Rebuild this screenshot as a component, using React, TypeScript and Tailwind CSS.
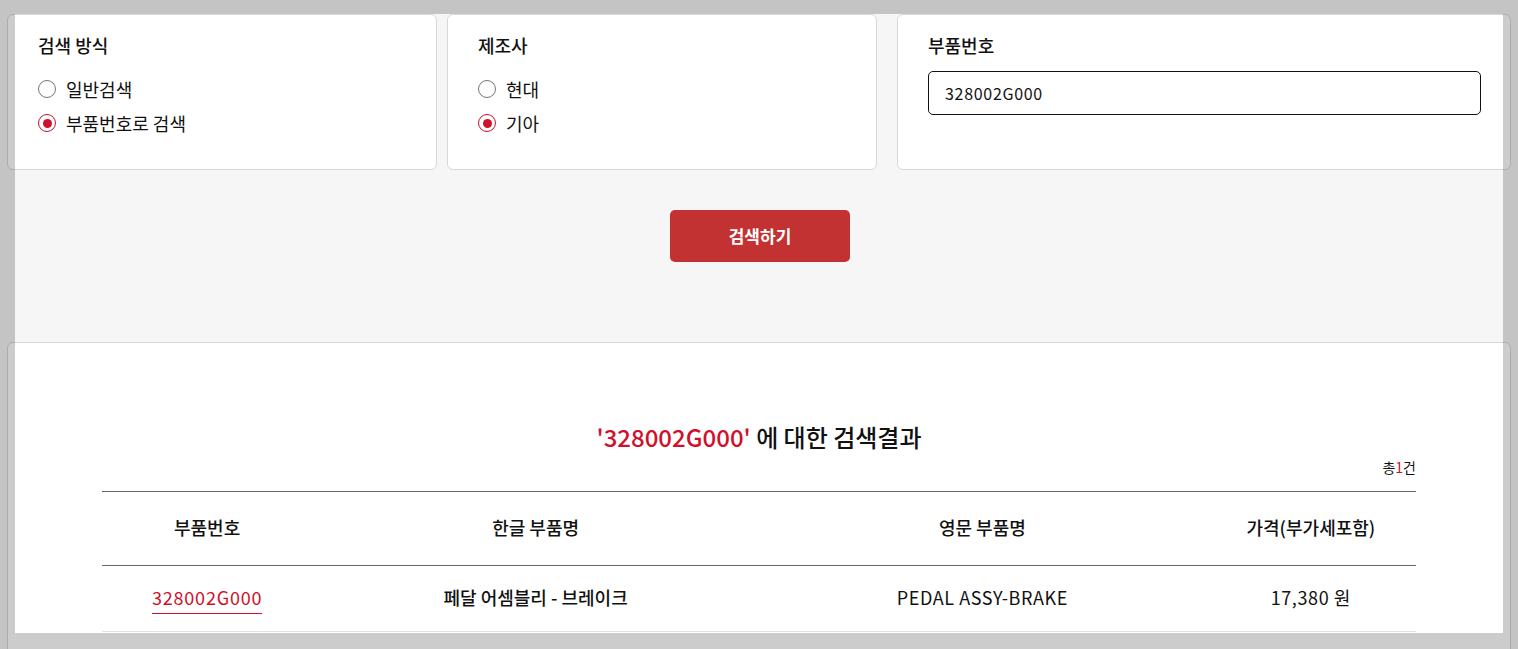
import React from 'react';

const font = { fontFamily: '"Noto Sans CJK KR", "Noto Sans", sans-serif' };

interface RadioProps {
  label: string;
  checked?: boolean;
}

const Radio: React.FC<RadioProps> = ({ label, checked }) => (
  <label className="flex items-center gap-[10px] h-6 text-[18px] text-[#111]">
    <span
      className={`flex items-center justify-center w-[18px] h-[18px] rounded-full border ${
        checked ? 'border-[#d0102c]' : 'border-[#767676]'
      }`}
    >
      {checked && <span className="w-[9px] h-[9px] rounded-full bg-[#d0102c]" />}
    </span>
    {label}
  </label>
);

const columns = [
  { label: '부품번호', w: 'w-[16%]' },
  { label: '한글 부품명', w: 'w-[34%]' },
  { label: '영문 부품명', w: 'w-[34%]' },
  { label: '가격(부가세포함)', w: 'w-[16%]' },
];

export default function App() {
  return (
    <div style={font} className="relative min-h-screen overflow-hidden bg-[#f6f6f6] px-[7px] pt-[14px]">
      <div className="flex">
        <div className="w-[430px] h-[156px] bg-white border border-[#d8d8d8] rounded-[6px] pl-[30px] pt-[18px]">
          <h3 className="text-[18px] font-medium leading-6 text-[#111]">검색 방식</h3>
          <div className="mt-[20px] flex flex-col gap-[10px]">
            <Radio label="일반검색" />
            <Radio label="부품번호로 검색" checked />
          </div>
        </div>
        <div className="ml-[10px] w-[430px] h-[156px] bg-white border border-[#d8d8d8] rounded-[6px] pl-[30px] pt-[18px]">
          <h3 className="text-[18px] font-medium leading-6 text-[#111]">제조사</h3>
          <div className="mt-[20px] flex flex-col gap-[10px]">
            <Radio label="현대" />
            <Radio label="기아" checked />
          </div>
        </div>
        <div className="ml-[20px] flex-1 h-[156px] bg-white border border-[#d8d8d8] rounded-[6px] pl-[30px] pr-[29px] pt-[18px]">
          <h3 className="text-[18px] font-medium leading-6 text-[#111]">부품번호</h3>
          <input
            readOnly
            value="328002G000"
            className="mt-[14px] w-full h-[44px] border border-[#111] rounded-[5px] px-4 text-[16px] tracking-[0.7px] text-[#111] outline-none"
          />
        </div>
      </div>

      <div className="mt-[40px] flex justify-center pl-[2px]">
        <button className="w-[180px] h-[52px] rounded-[5px] bg-[#c33232] text-white text-[17px] font-semibold">
          검색하기
        </button>
      </div>

      <div className="mt-[80px] bg-white border border-[#d8d8d8] rounded-[6px] px-[94px] pt-[76px] pb-[60px]">
        <h2 className="text-center text-[24px] leading-9 text-[#111] font-medium">
          <span className="text-[#d0102c]">'328002G000'</span> 에 대한 검색결과
        </h2>
        <p className="mt-[3px] mb-[15px] text-right text-[14px] leading-[18px] text-[#111]">
          총<span className="text-[#d0102c]">1</span>건
        </p>
        <table className="w-full border-collapse text-[18px] text-[#111]">
          <thead>
            <tr className="border-t border-b border-[#666]">
              {columns.map((c) => (
                <th key={c.label} className={`${c.w} h-[74px] pb-[2px] font-medium text-center`}>
                  {c.label}
                </th>
              ))}
            </tr>
          </thead>
          <tbody>
            <tr className="border-b border-[#e2e2e2]">
              <td className="h-[66px] pb-[2px] text-center">
                <a className="text-[#d0102c] tracking-[0.8px] border-b border-[#d0102c] pb-[3px]">328002G000</a>
              </td>
              <td className="pb-[2px] text-center font-medium">페달 어셈블리 - 브레이크</td>
              <td className="pb-[2px] text-center tracking-[0.6px]">PEDAL ASSY-BRAKE</td>
              <td className="pb-[2px] text-center tracking-[0.6px]">17,380 원</td>
            </tr>
          </tbody>
        </table>
      </div>

      <div className="pointer-events-none absolute top-[14px] left-[15px] w-[1488px] h-[619px] shadow-[0_0_0_9999px_rgba(0,0,0,0.2)]" />
    </div>
  );
}
